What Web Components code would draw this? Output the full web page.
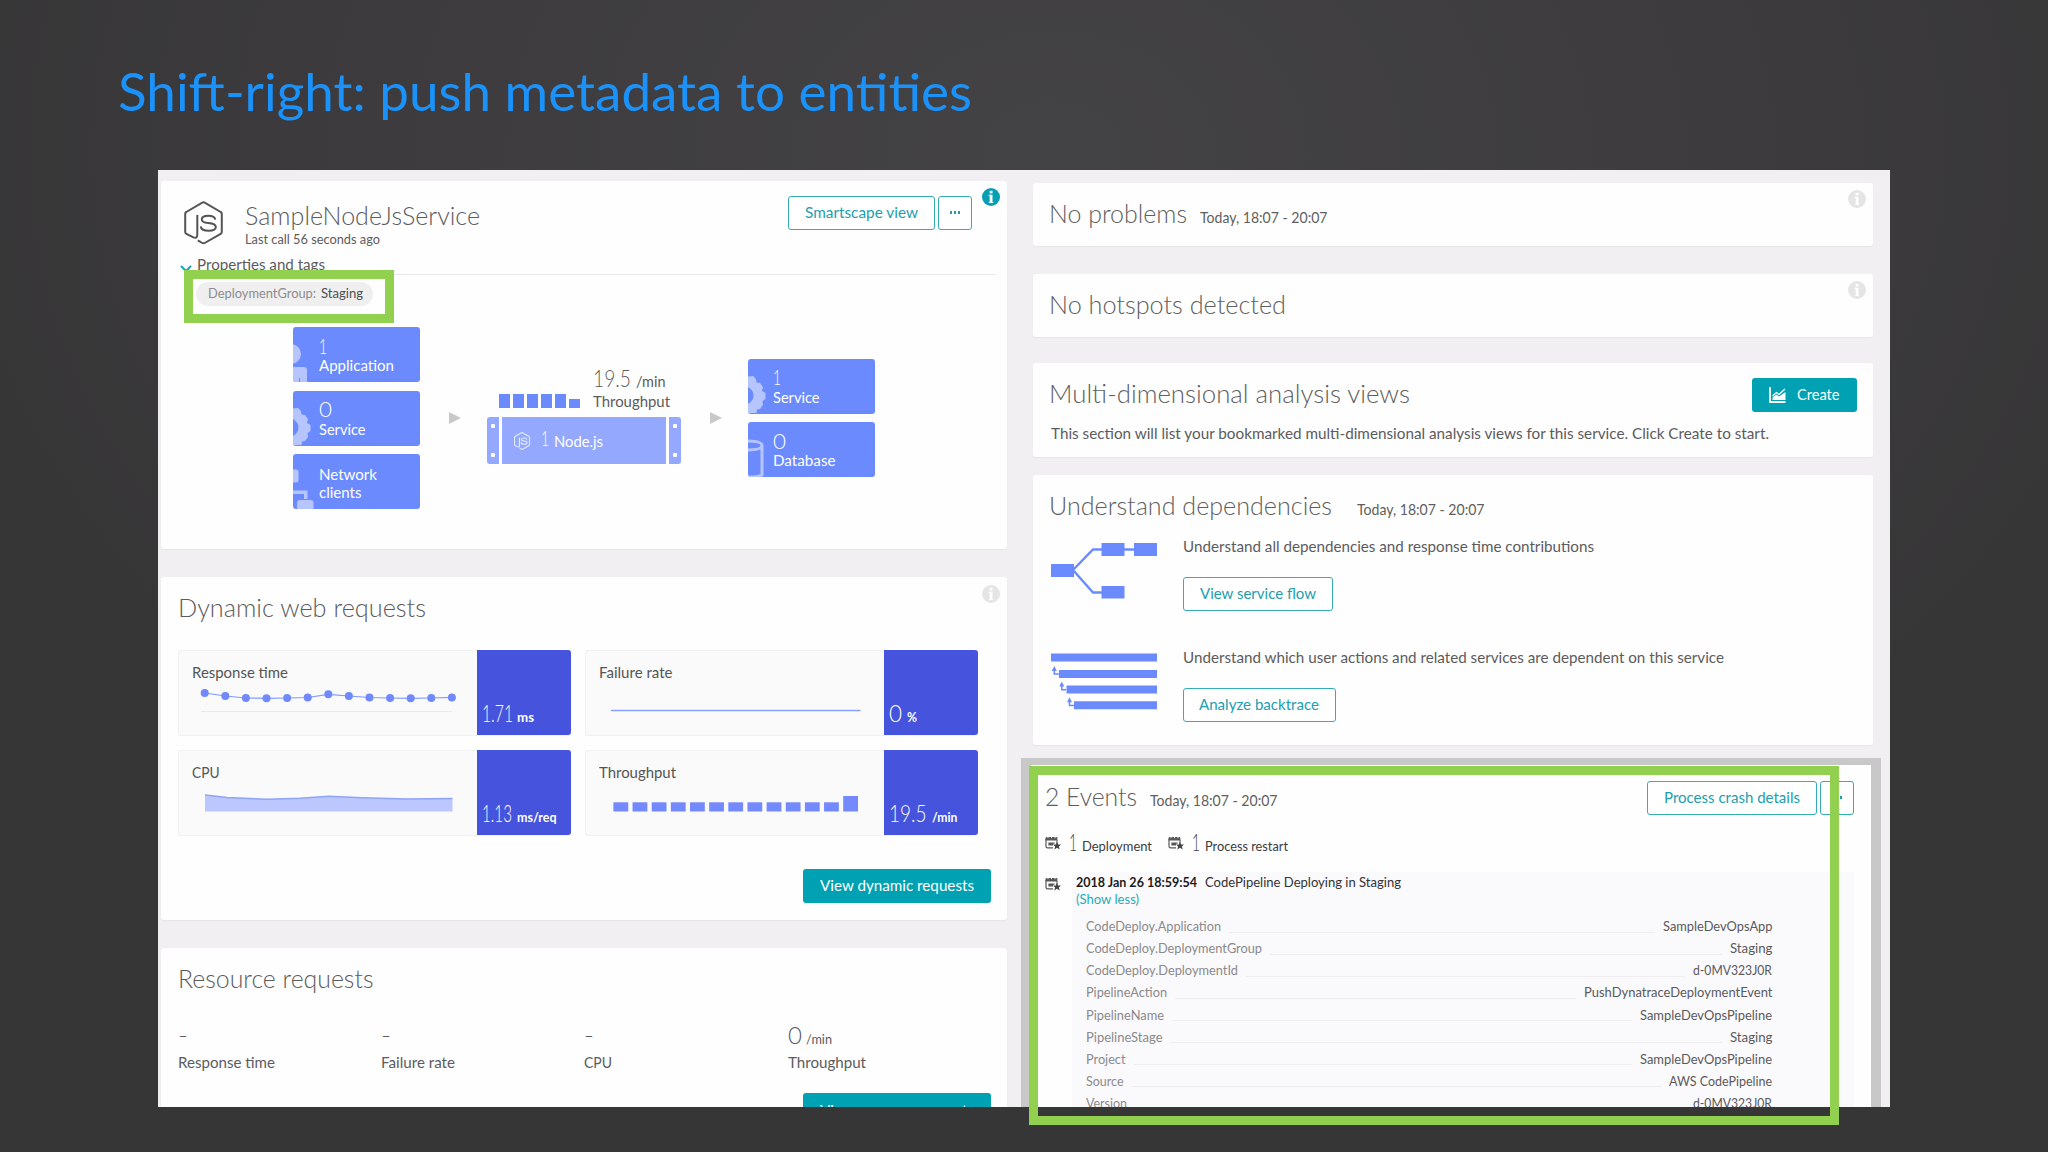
<!DOCTYPE html>
<html lang="en">
<head>
<meta charset="utf-8">
<title>Shift-right: push metadata to entities</title>
<style>
html,body{margin:0;padding:0;width:2048px;height:1152px;overflow:hidden;background:#3b393b}
</style>
</head>
<body>
<slide-page></slide-page>
<script>
const define=(name,html,setup)=>{
  customElements.define(name,class extends HTMLElement{
    connectedCallback(){
      if(this.shadowRoot)return;
      const t=document.createElement('template');
      t.innerHTML='<style>*{box-sizing:border-box}svg{display:block}</style>'+(typeof html==='function'?html(this):html);
      this.attachShadow({mode:'open'}).appendChild(t.content.cloneNode(true));
      if(setup)setup(this);
    }
  });
};
const a=(e,n,d='')=>e.getAttribute(n)??d;

/* A single line of text set to an exact measure: w = width, s = font size */
define('fit-text',e=>`<style>
:host{display:block;flex:none;font-size:${a(e,'s',15)}px;line-height:1;height:1em;width:${a(e,'w')}px;white-space:nowrap}
span{display:inline-block;transform-origin:0 50%;line-height:1;vertical-align:top}
</style><span><slot></slot></span>`,e=>{
  const s=e.shadowRoot.querySelector('span'),n=s.getBoundingClientRect().width;
  if(n)s.style.transform=`scaleX(${(+a(e,'w'))/n})`;
});

define('info-dot',e=>`<style>:host{display:block;width:18px;height:18px}</style>
<svg width="18" height="18" viewBox="0 0 18 18"><circle cx="9" cy="9" r="9" fill="${e.hasAttribute('on')?'#079fb3':'#e6e5e6'}"/><rect x="7.7" y="2.8" width="2.8" height="2.6" fill="#fff"/><path d="M6.7 6.8h3.8v7.4h.9v.8H6.8v-.8h.9V7.9h-1z" fill="#fff"/></svg>`);

define('node-logo',e=>`<style>:host{display:block}</style>
<svg width="${a(e,'w',39)}" height="${a(e,'h',44)}" viewBox="0 0 39 44" fill="none" stroke="currentColor" stroke-width="${a(e,'sw',2)}" stroke-linejoin="round">
<path d="M13.3 14V33.5Q13.3 38 9.4 36.4L2.4 32.8Q1.2 32.2 1.2 31V12.8Q1.2 11.6 2.3 11L18.3 1.7Q19.5 1 20.7 1.7L36.7 11Q37.8 11.6 37.8 12.8V31Q37.8 32.2 36.7 32.8L20.7 42Q19.5 42.7 18.3 42L13.8 39.4"/>
<path d="M31.3 18.6Q30.8 14.8 24.3 14.8Q17.8 14.8 17.8 18.4Q17.8 21.4 24.3 22Q31.8 22.6 31.8 26Q31.8 29.8 24.8 29.8Q17 29.8 16.8 25.4"/></svg>`);

define('ui-button',e=>{const solid=e.hasAttribute('solid');return `<style>
:host{display:flex;flex:none;align-items:center;justify-content:center;gap:11px;width:${a(e,'w')}px;height:34px;border-radius:3px;
border:${solid?'0':'1.3px solid #35adb9'};background:${solid?'#00a1b2':'#fff'};color:${solid?'#fff':'#1c9eae'};padding-bottom:1px}
</style><slot></slot>`});

define('more-dots',`<style>:host{display:flex;gap:2px}i{width:2.3px;height:2.3px;background:#1c9eae}</style><i></i><i></i><i></i>`);

define('dash-card',e=>`<style>
:host{display:block;position:relative;height:${a(e,'h')}px;background:#fefefe;border-radius:3px;box-shadow:0 1px 1px #e7e5e8;flex:none}
info-dot{position:absolute;right:${a(e,'ir',7)}px;top:${a(e,'it',8)}px}
</style>${e.hasAttribute('info')?`<info-dot ${a(e,'info')}></info-dot>`:''}<slot></slot>`);

/* Blue dependency box with a watermark cropped by its left edge */
const marks={
 app:'<circle cx="-2" cy="27" r="10"/><path d="M-8 40H11Q14 40 14 43V55H7V51H6V55H-8z"/>',
 gear:'<path d="M0 17.5L5 17L8 20L8.5 23.5L12 24L15 28L14 32L17.5 34V40L14.5 42L15 46L12 50L9 50.5L8.5 54L0 54V45Q5.5 42 5.5 36.5Q5.5 31 0 28z"/>',
 net:'<path d="M0 15.5H3Q5.5 15.5 5.5 18V26Q5.5 28.5 3 28.5H0zM0 36.5H14.5V45H11V40H0zM4 49Q4 46 7 46H18Q20.5 46 20.5 49V55H4z"/>',
 db:'<path fill="none" stroke="#b7c5ff" stroke-width="3" d="M-2 19Q14 19 14 23.5Q14 28 -2 28M14 23.5V53Q10 55 0 55"/>'};
define('entity-box',e=>`<style>
:host{display:flex;flex-direction:column;justify-content:flex-start;gap:1.5px;position:relative;overflow:hidden;width:127px;height:55px;border-radius:3px;background:#6b8afd;color:#fff;padding:${a(e,'pt',7.5)}px 0 0 25.5px}
svg{position:absolute;left:0;top:0;fill:#b7c5ff}
fit-text{position:relative}
</style><svg width="30" height="55" viewBox="0 0 30 55">${marks[a(e,'mark')]}</svg><slot></slot>`);

define('flow-arrow',`<style>:host{display:block;width:12px;height:12px}</style><svg width="12" height="12"><path d="M0 0L12 6L0 12z" fill="#c9c8ca"/></svg>`);

define('metric-tile',e=>`<style>
:host{display:flex;width:393px;height:86px;border-radius:3px;background:#fafafb;border:1px solid #f1f0f2;border-right:0;color:#555}
.l{flex:1;padding:14px 0 0 13px}
.v{width:93.5px;margin:-.5px 0;background:#4654dd;border-radius:0 3px 3px 0;color:#fff;display:flex;align-items:baseline;gap:${a(e,'gap',5)}px;padding:52px 0 0 5px}
.c{margin-top:8px;height:40px}
</style><div class="l"><slot name="label"></slot><div class="c"><slot name="chart"></slot></div></div><div class="v"><slot></slot></div>`);

define('event-icon',`<style>:host{display:block;flex:none;width:16px;height:14px}</style>
<svg width="16" height="14" viewBox="0 0 16 14"><path d="M1 2.8V10.2Q1 11.8 2.6 11.8H8" fill="none" stroke="#58585a" stroke-width="1.2"/><path d="M.6 4.6V2Q.6 1 1.8 1H11.4Q12.4 1 12.4 2V4.6z" fill="#58585a"/><path d="M3 0V2.2M6.5 0V2.2M10 0V2.2" stroke="#fff" stroke-width=".9"/><path d="M12 4V7" stroke="#58585a" stroke-width="1"/><path d="M3.4 6.6H9.6V7.8H8V9.4H3.4z" fill="#58585a"/><path d="M12 5.6L13.2 8.4L16 8.6L13.9 10.4L14.7 13.4L12 11.8L9.3 13.4L10.1 10.4L8 8.6L10.8 8.4z" fill="#454547"/></svg>`);

define('kv-row',e=>`<style>
:host{display:flex;height:22.15px;align-items:flex-start;color:#8b8a8c}
i{flex:1;height:1px;background:#efedf0;margin:11.5px 8px 0 8px}
.v{color:#5a595b}
</style><fit-text s="13.2" w="${a(e,'kw')}">${a(e,'k')}</fit-text><i></i><fit-text class="v" s="13.2" w="${a(e,'vw')}">${a(e,'v')}</fit-text>`);

define('highlight-frame',`<style>:host{display:block;position:absolute;border:9.6px solid #92d050;z-index:5}</style>`);

define('service-card',`<style>
:host{display:block;color:#5c5b5d}
.head{display:flex;padding:15px 35px 0 23px;height:77px;align-items:flex-start}
node-logo{color:#545355;margin-top:5px}
.t{margin:6.5px 0 0 22px;flex:1}
.t fit-text+fit-text{margin-top:5px}
.b{display:flex;gap:3px}
.p{display:flex;margin-left:19px;height:24px;align-items:flex-start}
.p svg{margin:7px 5px 0 0}
.p hr{flex:1;border:0;border-top:1px solid #e9e7ea;margin:16px 11px 0 8px}
.tag{display:flex;margin-left:34.5px;width:177px;height:24px;border-radius:12px;background:#efefef;padding:5px 0 0 12px;gap:5px;color:#8d8c8e}
.tag .k{color:#505052}
.map{display:flex;align-items:center;margin:20.5px 0 0 132.3px;height:183px}
.col{display:flex;flex-direction:column;gap:8.5px}
.node{margin:0 28.5px 0 26px;width:194.5px;padding-bottom:7px}
.top{display:flex;align-items:flex-end;height:52px;padding-left:12.3px;margin-bottom:0}
.bars{display:flex;gap:3px;align-items:flex-end;margin:0 13px 9.5px 0}
.bars i{width:11px;height:13.6px;background:#6b8afd}
.bars i:last-child{height:8.5px}
.tp{display:flex;align-items:baseline;gap:5px}
.srv{display:flex;gap:3px;height:46.5px}
.s{width:12.5px;background:#94a9fd;border-radius:3px 0 0 3px;display:flex;flex-direction:column;justify-content:space-between;align-items:center;padding:7px 0}
.s:last-child{border-radius:0 3px 3px 0}.s i{width:3.5px;height:3.5px;background:#fff;border-radius:1px}
.m{flex:1;background:#94a9fd;display:flex;align-items:flex-start;color:#fff;padding-left:11.5px}
.m node-logo{color:#e4eaff;margin:15px 11px 0 0}
</style>
<div class="head"><node-logo></node-logo>
<div class="t"><fit-text s="25" w="235" style="font-weight:300">SampleNodeJsService</fit-text><fit-text s="13" w="135">Last call 56 seconds ago</fit-text></div>
<div class="b"><ui-button w="147"><fit-text s="15" w="113">Smartscape view</fit-text></ui-button><ui-button w="34"><more-dots></more-dots></ui-button></div></div>
<div class="p"><svg width="12" height="8"><path d="M1 1L6 6L11 1" fill="none" stroke="#12a8b8" stroke-width="2"/></svg><fit-text s="14.5" w="128">Properties and tags</fit-text><hr></div>
<div class="tag"><fit-text s="13.2" w="108">DeploymentGroup:</fit-text><fit-text class="k" s="13.2" w="42">Staging</fit-text></div>
<div class="map">
<div class="col">
<entity-box mark="app"><fit-text s="22" w="8" style="font-weight:300">1</fit-text><fit-text s="14.8" w="75">Application</fit-text></entity-box>
<entity-box mark="gear"><fit-text s="22" w="13" style="font-weight:300">0</fit-text><fit-text s="14.8" w="46.5">Service</fit-text></entity-box>
<entity-box mark="net" pt="13"><fit-text s="14.8" w="58">Network</fit-text><fit-text s="14.8" w="42.5" style="margin-top:1.8px">clients</fit-text></entity-box>
</div>
<flow-arrow style="margin-left:28.7px"></flow-arrow>
<div class="node"><div class="top"><div class="bars"><i></i><i></i><i></i><i></i><i></i><i></i></div>
<div><div class="tp"><fit-text s="22.5" w="38" style="font-weight:300">19.5</fit-text><fit-text s="15" w="29.5">/min</fit-text></div><fit-text s="15" w="77" style="margin:3.5px 0 8px">Throughput</fit-text></div></div>
<div class="srv"><div class="s"><i></i><i></i></div><div class="m"><node-logo w="16" h="18" sw="2.6"></node-logo><fit-text s="22" w="8" style="font-weight:300;margin:10px 5px 0 0">1</fit-text><fit-text s="14.8" w="49" style="margin-top:17px">Node.js</fit-text></div><div class="s"><i></i><i></i></div></div></div>
<flow-arrow style="margin-right:26px"></flow-arrow>
<div class="col">
<entity-box mark="gear"><fit-text s="22" w="8" style="font-weight:300">1</fit-text><fit-text s="14.8" w="46.5">Service</fit-text></entity-box>
<entity-box mark="db"><fit-text s="22" w="13" style="font-weight:300">0</fit-text><fit-text s="14.8" w="62.5">Database</fit-text></entity-box>
</div></div>`);

const ys=[5,8,10,10.3,10,9.5,6.3,8,9.5,10,10.3,10,9.4];
const pts=ys.map((y,i)=>[12.7+i*20.6,y]);
define('requests-card',`<style>
:host{display:block;color:#5c5b5d}
h{display:block;padding:17.3px 0 0 17px;font-weight:300}
.grid{display:grid;grid-template-columns:393px 393px;gap:13.8px 14px;margin:29.7px 0 0 16.5px}
ui-button{margin:33.5px 0 0 642px}
.n{font-weight:300}
</style><h><fit-text s="26" w="248">Dynamic web requests</fit-text></h>
<div class="grid">
<metric-tile gap="4"><fit-text slot="label" s="15" w="96">Response time</fit-text>
<svg slot="chart" width="270" height="40"><path d="M9 23.5H260" stroke="#e6eaf1"/><polyline fill="none" stroke="#7f99ff" stroke-width="1.2" points="${pts.map(p=>p.join()).join(' ')}"/>${pts.map(p=>`<circle cx="${p[0]}" cy="${p[1]}" r="4" fill="#7089fc"/>`).join('')}</svg>
<fit-text class="n" s="23" w="31">1.71</fit-text><fit-text s="13.5" w="17" style="font-weight:700">ms</fit-text></metric-tile>
<metric-tile gap="5"><fit-text slot="label" s="15" w="73.5">Failure rate</fit-text>
<svg slot="chart" width="270" height="40"><path d="M12 22.5H261.500" stroke="#8ba0ff" stroke-width="1.6"/></svg>
<fit-text class="n" s="23" w="13">0</fit-text><fit-text s="13" w="10" style="font-weight:700">%</fit-text></metric-tile>
<metric-tile gap="5"><fit-text slot="label" s="15" w="27.5">CPU</fit-text>
<svg slot="chart" width="270" height="40"><path d="M13 7L35 9.500L75 11.300L108 10.300L137 8.300L170 9.800L215 11L260.500 10.500V23.500H13z" fill="#bcc8fd"/><path d="M13 7L35 9.500L75 11.300L108 10.300L137 8.300L170 9.800L215 11L260.500 10.500" fill="none" stroke="#8fa3fb" stroke-width="1.4"/></svg>
<fit-text class="n" s="23" w="30">1.13</fit-text><fit-text s="13.5" w="39.5" style="font-weight:700">ms/req</fit-text></metric-tile>
<metric-tile gap="5"><fit-text slot="label" s="15" w="77">Throughput</fit-text>
<svg slot="chart" width="270" height="40" fill="#7489fb">${Array.from({length:13},(_,i)=>`<rect x="${14.4+i*19.15}" y="${i==12?8:14.3}" width="14.8" height="${i==12?15.5:9.200}"/>`).join('')}</svg>
<fit-text class="n" s="23" w="37.500">19.5</fit-text><fit-text s="13.500" w="25.500" style="font-weight:700">/min</fit-text></metric-tile>
</div>
<ui-button solid w="188"><fit-text s="15" w="154">View dynamic requests</fit-text></ui-button>`);

define('resource-card',`<style>
:host{display:block;color:#5c5b5d}
h{display:block;padding:17px 0 0 17px;font-weight:300}
.r{display:grid;grid-template-columns:repeat(4,203.400px);margin:33px 0 0 16.500px}
.r>div>div{display:flex;align-items:baseline;gap:4px;height:23px;font-weight:300;margin-bottom:8px}
ui-button{margin:23px 0 0 642px;align-items:flex-start;padding-top:10px}
</style><h><fit-text s="26" w="195.500">Resource requests</fit-text></h>
<div class="r"><div><div><fit-text s="23" w="10">-</fit-text></div><fit-text s="15" w="97">Response time</fit-text></div>
<div><div><fit-text s="23" w="10">-</fit-text></div><fit-text s="15" w="74">Failure rate</fit-text></div>
<div><div><fit-text s="23" w="10">-</fit-text></div><fit-text s="15" w="28">CPU</fit-text></div>
<div><div><fit-text s="23" w="14">0</fit-text><fit-text s="13.500" w="26" style="font-weight:400">/min</fit-text></div><fit-text s="15" w="78">Throughput</fit-text></div></div>
<ui-button solid w="188"><fit-text s="15" w="154">View resource requests</fit-text></ui-button>`);

define('card-heading',e=>`<style>:host{display:flex;align-items:baseline;gap:${a(e,'gap',13)}px;color:#5f5e60}.h{font-weight:300}</style>
<fit-text class="h" s="26" w="${a(e,'w')}">${a(e,'t')}</fit-text>${e.hasAttribute('time')?'<fit-text s="15" w="127.500">Today, 18:07 - 20:07</fit-text>':''}`);

define('analysis-card',`<style>:host{display:block;color:#5c5b5d}.r{display:flex;justify-content:space-between;padding:15px 16px 0 16.500px}card-heading{margin-top:2px}</style>
<div class="r"><card-heading w="361" t="Multi-dimensional analysis views"></card-heading>
<ui-button solid w="105"><svg width="17" height="16" viewBox="0 0 17 16"><path d="M1 0V15H16.500" fill="none" stroke="#fff" stroke-width="1.800"/><path d="M3.500 13V10.500L7.500 7.500L10 9.500L16.500 5V13z" fill="#fff"/><path d="M3.500 9L7.500 5.500L10 7.500L16 2" fill="none" stroke="#fff" stroke-width="1.300"/></svg><fit-text s="15" w="42.500">Create</fit-text></ui-button></div>
<fit-text s="15" w="718" style="margin:13.500px 0 0 18.500px">This section will list your bookmarked multi-dimensional analysis views for this service. Click Create to start.</fit-text>`);

define('dependencies-card',`<style>:host{display:block;color:#5c5b5d;padding:17px 0 0 16.500px}
.row{display:flex;gap:25.500px;padding-left:2px}.row svg{flex:none}
.row fit-text{margin-bottom:0}.row ui-button{margin-top:23.500px}</style>
<card-heading gap="25" w="283" time t="Understand dependencies"></card-heading>
<div class="row" style="margin-top:21px;height:111px"><svg width="106" height="60" viewBox="0 0 106 60" style="margin-top:2px"><path d="M22 29L42 8.500H90M22 29L42 51.500H55" fill="none" stroke="#6b8afd" stroke-width="2.400"/><path d="M0 23h23v13H0zM50.500 2h23v13h-23zM83 2h23v13H83zM50.500 45h23v12.500h-23z" fill="#6b8afd"/></svg>
<div><fit-text s="15" w="411">Understand all dependencies and response time contributions</fit-text><ui-button w="150.500" style="margin-top:22.500px"><fit-text s="15" w="116">View service flow</fit-text></ui-button></div></div>
<div class="row"><svg width="106" height="60" viewBox="0 0 106 60" style="margin-top:1px"><path d="M0 2.500h106v8H0zM8 19h98v8H8zM15.500 34.500H106v8H15.500zM23 50.300h83v8H23z" fill="#6b8afd"/><path d="M3.300 18V23H8M10.800 34V38.700H15M18.500 50V54.500H23" fill="none" stroke="#6b8afd" stroke-width="1.500"/><path d="M3.300 15l2.500 5h-5zM10.800 30.500l2.500 5h-5zM18.500 46.300l2.500 5h-5z" fill="#6b8afd"/></svg>
<div><fit-text s="15" w="541">Understand which user actions and related services are dependent on this service</fit-text><ui-button w="153.500" style="margin-top:22.500px"><fit-text s="15" w="120">Analyze backtrace</fit-text></ui-button></div></div>`);

define('events-card',`<style>:host{display:block;background:#fefefe;border:solid #c9c8c9;border-width:7px 10px 0;height:360px;margin-left:-12px;margin-right:-8px;flex:none}
.in{padding:16px 17px 0 14px}
.head{display:flex;align-items:flex-start}card-heading{margin-top:2px;flex:1}.b{display:flex;gap:3px}
.cnt{display:flex;align-items:baseline;margin-top:16px;height:36px;color:#3c3b3d}
.cnt event-icon{align-self:flex-start;margin-top:5px}
.ev{display:flex;margin-top:5px}
.ev event-icon{margin-top:5px;width:27px}
.body{flex:1;background:#faf9fb;padding:3.500px 82px 0 4px;height:240px}
.l{display:flex;gap:8px;color:#333}
.rows{padding:14px 0 0 10.500px}</style>
<div class="in"><div class="head"><card-heading w="92" time t="2 Events"></card-heading><div class="b"><ui-button w="170"><fit-text s="15" w="136">Process crash details</fit-text></ui-button><ui-button w="34"><more-dots></more-dots></ui-button></div></div>
<div class="cnt"><event-icon></event-icon><fit-text s="23" w="8" style="font-weight:300;margin:0 5px 0 8px">1</fit-text><fit-text s="13.500" w="70">Deployment</fit-text><event-icon style="margin-left:16px"></event-icon><fit-text s="23" w="8" style="font-weight:300;margin:0 5px 0 8px">1</fit-text><fit-text s="13.500" w="83">Process restart</fit-text></div>
<div class="ev"><event-icon></event-icon><div class="body"><div class="l"><fit-text s="13.500" w="121" style="font-weight:700;color:#1c1c1c">2018 Jan 26 18:59:54</fit-text><fit-text s="13.500" w="196">CodePipeline Deploying in Staging</fit-text></div>
<fit-text s="13.500" w="63" style="color:#27adba;margin-top:3.500px">(Show less)</fit-text>
<div class="rows">
<kv-row k="CodeDeploy.Application" kw="135" v="SampleDevOpsApp" vw="109.500"></kv-row>
<kv-row k="CodeDeploy.DeploymentGroup" kw="176" v="Staging" vw="42.500"></kv-row>
<kv-row k="CodeDeploy.DeploymentId" kw="152" v="d-0MV323J0R" vw="79"></kv-row>
<kv-row k="PipelineAction" kw="81" v="PushDynatraceDeploymentEvent" vw="188.500"></kv-row>
<kv-row k="PipelineName" kw="78" v="SampleDevOpsPipeline" vw="132"></kv-row>
<kv-row k="PipelineStage" kw="76.500" v="Staging" vw="42.500"></kv-row>
<kv-row k="Project" kw="39.500" v="SampleDevOpsPipeline" vw="132"></kv-row>
<kv-row k="Source" kw="37.500" v="AWS CodePipeline" vw="103"></kv-row>
<kv-row k="Version" kw="41" v="d-0MV323J0R" vw="79"></kv-row>
</div></div></div></div>`);

define('slide-page',`<style>
:host{display:block;position:relative;width:2048px;height:1152px;overflow:hidden;font-family:Lato,"Open Sans",sans-serif;
background:radial-gradient(ellipse 1100px 800px at 1050px 150px,#434244,#3d3b3e 60%,#373637)}
.title{padding:63.700px 0 0 118px;height:170px;color:#1a92fa}
.shot{margin-left:158px;width:1732px;height:937px;background:#f1eff2;overflow:hidden;display:flex;gap:25.500px;padding:11px 0 0 3px}
.left{width:846px;display:flex;flex-direction:column;gap:28px}
.right{width:840.500px;display:flex;flex-direction:column;padding-top:2px}
.hd{padding:17px 0 0 16.500px}
</style>
<div class="title"><fit-text s="53" w="854">Shift-right: push metadata to entities</fit-text></div>
<div class="shot">
<div class="left">
<dash-card h="368" info="on" it="7"><service-card></service-card></dash-card>
<dash-card h="343" info><requests-card></requests-card></dash-card>
<dash-card h="240"><resource-card></resource-card></dash-card>
</div>
<div class="right">
<dash-card h="63" info it="7"><card-heading class="hd" w="138" time t="No problems"></card-heading></dash-card>
<dash-card h="63" info it="7" style="margin-top:28px"><card-heading class="hd" w="237" t="No hotspots detected"></card-heading></dash-card>
<dash-card h="94" style="margin-top:26px"><analysis-card></analysis-card></dash-card>
<dash-card h="270" style="margin-top:18px"><dependencies-card></dependencies-card></dash-card>
<events-card style="margin-top:13px"></events-card>
</div></div>
<highlight-frame style="left:184px;top:270px;width:210px;height:53px"></highlight-frame>
<highlight-frame style="left:1029px;top:766px;width:810px;height:359px"></highlight-frame>`);
</script>
</body>
</html>
